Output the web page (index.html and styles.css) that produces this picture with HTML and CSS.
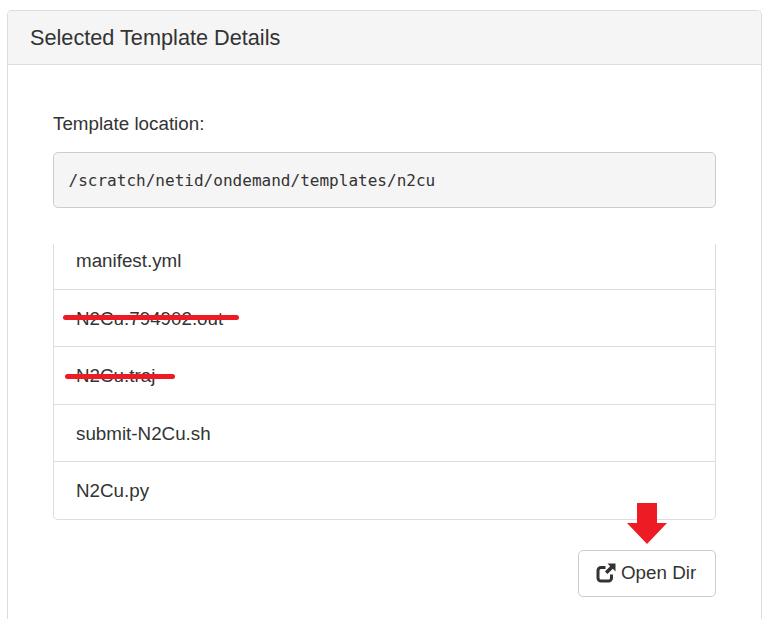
FILE: index.html
```html
<!DOCTYPE html>
<html lang="en">
<head>
  <meta charset="UTF-8">
  <meta name="viewport" content="width=device-width, initial-scale=1.0">
  <title>Selected Template Details</title>
  <link rel="stylesheet" href="styles.css">
</head>
<body>
  <div class="panel">
    <div class="panel-heading">Selected Template Details</div>
    <div class="panel-body">
      <p class="location-label">Template location:</p>
      <pre class="location-path">/scratch/netid/ondemand/templates/n2cu</pre>

      <div class="file-list">
        <div class="file-item file-item-clipped">manifest.yml</div>
        <div class="file-item">
          N2Cu.794902.out
          <span class="strike strike-out"></span>
        </div>
        <div class="file-item">
          N2Cu.traj
          <span class="strike strike-traj"></span>
        </div>
        <div class="file-item">submit-N2Cu.sh</div>
        <div class="file-item">N2Cu.py</div>
      </div>

      <div class="actions">
        <svg class="arrow" width="40" height="41" viewBox="0 0 40 41">
          <polygon points="10,0 30,0 30,20 40,20 20,41 0,20 10,20" fill="#ed1c24"/>
        </svg>
        <button class="open-dir">
          <svg class="open-icon" width="20" height="20" viewBox="0 0 20 20">
            <path d="M9.5 4.5H5A3 3 0 0 0 2 7.5V15a3 3 0 0 0 3 3h7.5a3 3 0 0 0 3-3v-3.5" fill="none" stroke="#333" stroke-width="3"/>
            <path d="M11.5 0.5h8v8l-2.7-2.7-5.3 5.3-2.6-2.6 5.3-5.3z" fill="#333"/>
          </svg>
          Open Dir
        </button>
      </div>
    </div>
  </div>
</body>
</html>
```

FILE: styles.css
```css
body {
  margin: 0;
  height: 619px;
  overflow: hidden;
  background: #fff;
  font-family: "Liberation Sans", Arial, sans-serif;
  font-size: 18.8px;
  color: #333;
}
.panel {
  margin: 10px 5px 0 7px;
  height: 609px;
  border: 1px solid #ddd;
  border-bottom: none;
  border-radius: 5px 5px 0 0;
  box-sizing: border-box;
}
.panel-heading {
  height: 54px;
  padding-left: 22px;
  line-height: 53px;
  font-size: 21.7px;
  background: #f5f5f5;
  border-bottom: 1px solid #ddd;
  border-radius: 4px 4px 0 0;
  box-sizing: border-box;
}
.panel-body {
  padding: 0 45px;
}
.location-label {
  margin: 0;
  padding-top: 47px;
  line-height: 24px;
}
.location-path {
  margin: 16px 0 36px;
  height: 56px;
  padding-left: 14.5px;
  line-height: 55px;
  font-family: "DejaVu Sans Mono", monospace;
  font-size: 16.05px;
  background: #f5f5f5;
  border: 1px solid #ccc;
  border-radius: 5px;
  box-sizing: border-box;
}
.file-list {
  border: 1px solid #ddd;
  border-top: none;
  border-radius: 0 0 5px 5px;
}
.file-item {
  position: relative;
  height: 57.5px;
  padding-left: 22px;
  line-height: 57px;
  border-top: 1px solid #ddd;
  box-sizing: border-box;
}
.file-item-clipped {
  height: 44.8px;
  line-height: 33px;
  border-top: none;
}
.strike {
  position: absolute;
  height: 5px;
  background: #ed1c24;
  border-radius: 3px;
}
.strike-out {
  left: 9px;
  top: 25px;
  width: 176px;
}
.strike-traj {
  left: 11px;
  top: 27px;
  width: 110px;
}
.actions {
  position: relative;
  display: flex;
  justify-content: flex-end;
  margin-top: 30px;
}
.arrow {
  position: absolute;
  right: 49px;
  top: -47px;
}
.open-dir {
  display: flex;
  align-items: center;
  gap: 5px;
  width: 138px;
  height: 47px;
  padding: 0 0 0 17px;
  font-family: inherit;
  font-size: 18.8px;
  color: #333;
  background: #fff;
  border: 1px solid #ccc;
  border-radius: 5px;
}
```
